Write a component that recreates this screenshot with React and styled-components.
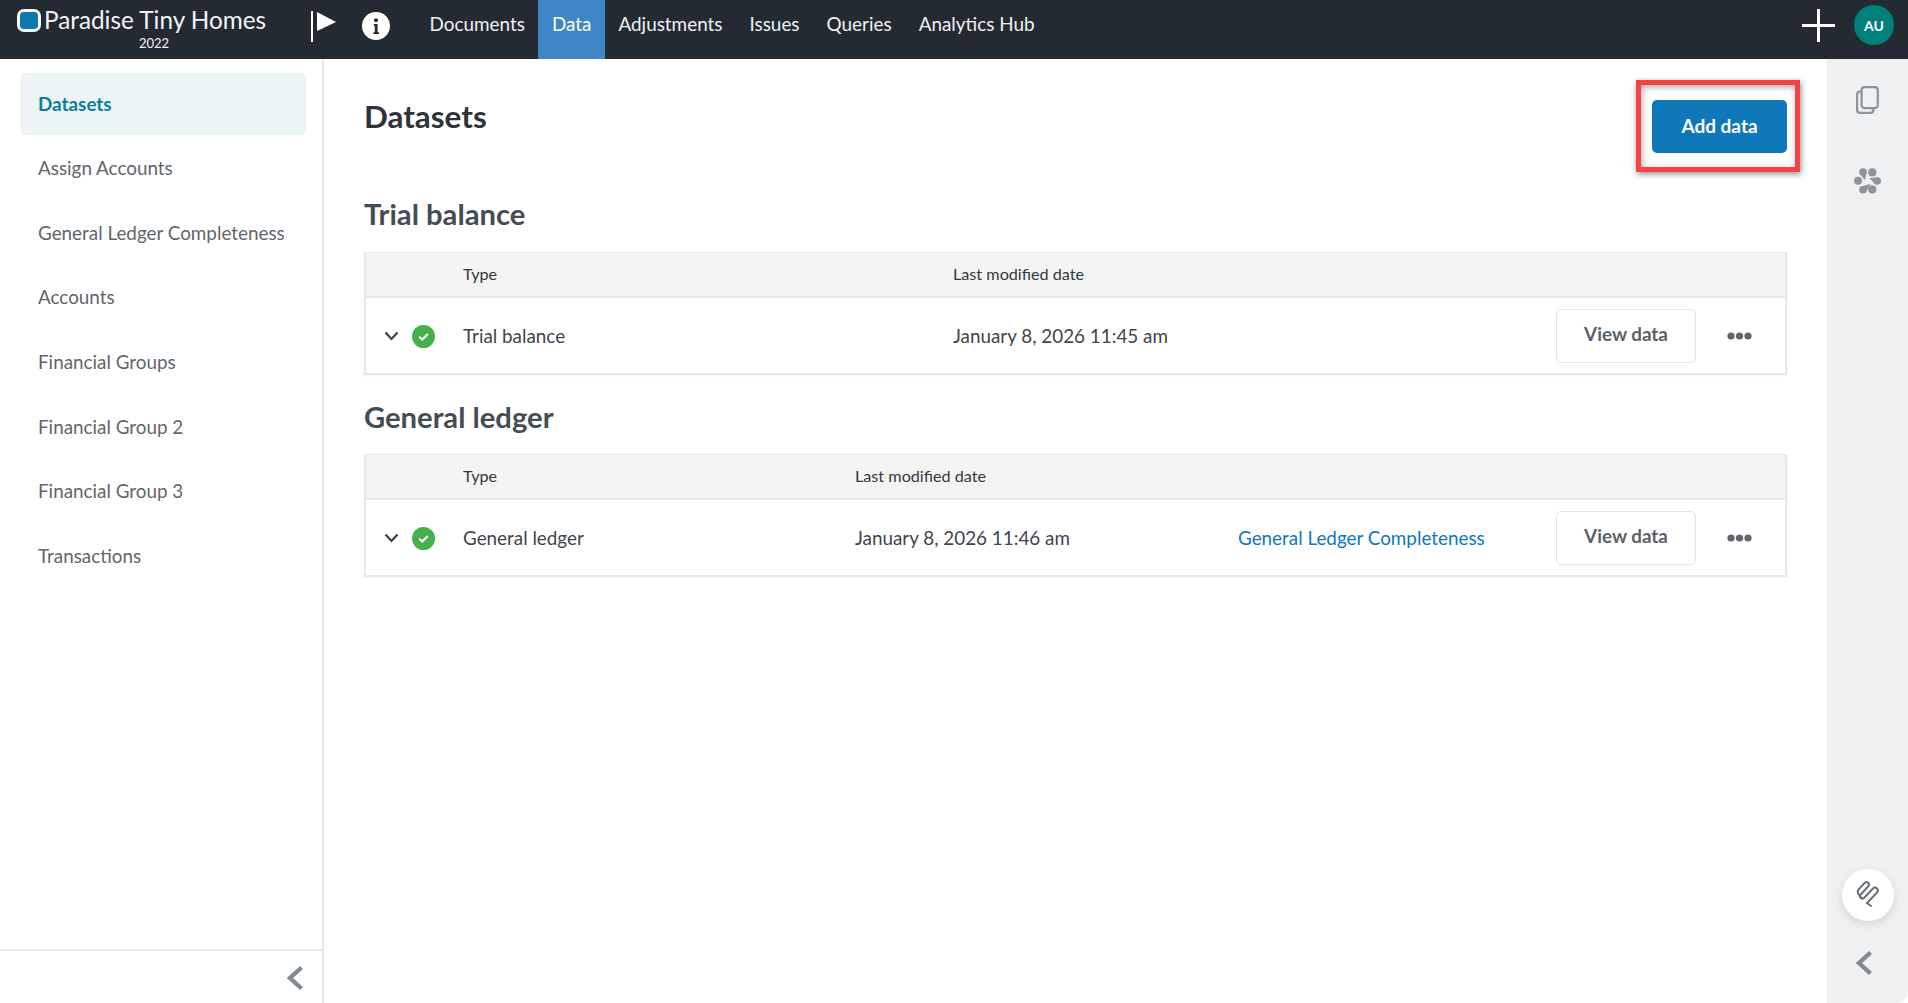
import React from "react";
import styled, { createGlobalStyle } from "styled-components";

const GlobalStyle = createGlobalStyle`
  html, body, #root { height: 100%; margin: 0; }
  body { font-family: Lato, "Open Sans", sans-serif; color: #3c4248; background: #fff; overflow: hidden; }
  * { box-sizing: border-box; }
`;

const Page = styled.div`
  display: flex;
  flex-direction: column;
  height: 1003px;
`;

const Header = styled.header`
  display: flex;
  align-items: stretch;
  height: 59px;
  flex: none;
  background: #232a32;
  color: #fff;
`;

const Brand = styled.div`
  width: 311px;
  flex: none;
  padding: 7px 0 0 17px;
`;

const BrandRow = styled.div`
  display: flex;
  align-items: center;
  gap: 3px;
  width: 250px;
`;

const LogoMark = styled.span`
  width: 24px;
  height: 23px;
  border: 3px solid #f4f7f9;
  border-radius: 7px;
  background: #0e78ad;
  flex: none;
`;

const BrandName = styled.span`
  font-size: 24.3px;
  line-height: 26px;
  white-space: nowrap;
  color: #f2f5f7;
`;

const BrandYear = styled.div`
  font-size: 13px;
  line-height: 16px;
  width: 274px;
  text-align: center;
  margin-top: 2px;
  color: #f0f2f4;
`;

const HeaderIcons = styled.div`
  display: flex;
  align-items: center;
  gap: 26px;
  width: 105px;
  flex: none;
  padding-bottom: 7px;
`;

const Nav = styled.nav`
  display: flex;
  flex: 1;
`;

const NavItem = styled.a`
  display: flex;
  align-items: center;
  padding: 0 13.5px 12px;
  font-size: 18.9px;
  color: ${(p) => (p.$active ? "#fff" : "#eef1f3")};
  background: ${(p) => (p.$active ? "#3f86c7" : "transparent")};
`;

const HeaderRight = styled.div`
  display: flex;
  align-items: center;
  gap: 19px;
  padding: 0 14px 9px 0;
`;

const Avatar = styled.span`
  display: flex;
  align-items: center;
  justify-content: center;
  width: 40px;
  height: 40px;
  border-radius: 50%;
  background: #00807a;
  font-size: 14px;
  font-weight: 700;
`;

const Body = styled.div`
  display: flex;
  flex: 1;
  min-height: 0;
`;

const Sidebar = styled.aside`
  display: flex;
  flex-direction: column;
  width: 324px;
  flex: none;
  border-right: 2px solid #e6e7e8;
`;

const SideList = styled.div`
  flex: 1;
  padding: 14px 16px 0 20px;
`;

const SideItem = styled.a`
  display: flex;
  align-items: center;
  height: ${(p) => (p.$active ? "62px" : "64.7px")};
  padding-left: 18px;
  padding-bottom: ${(p) => (p.$active ? "2px" : "0")};
  border-radius: 5px;
  font-size: 18.85px;
  font-weight: ${(p) => (p.$active ? 700 : 400)};
  color: ${(p) => (p.$active ? "#0b7f96" : "#5f666c")};
  background: ${(p) => (p.$active ? "#edf4f6" : "transparent")};
`;

const SideFooter = styled.div`
  display: flex;
  align-items: center;
  justify-content: flex-end;
  height: 54px;
  padding: 2px 18px 0 0;
  border-top: 2px solid #e6e7e8;
`;

const Main = styled.main`
  flex: 1;
  padding: 22px 40px 0;
`;

const TitleRow = styled.div`
  display: flex;
  justify-content: space-between;
  align-items: flex-start;
  height: 114px;
`;

const PageTitle = styled.h1`
  margin: 15px 0 0;
  font-size: 31.4px;
  line-height: 40px;
  font-weight: 700;
  color: #2f3338;
`;

const Highlight = styled.div`
  position: relative;
  margin-top: 19px;
`;

const HighlightBox = styled.span`
  position: absolute;
  top: -20px;
  left: -16px;
  right: -13px;
  bottom: -19px;
  border: 5px solid #f44346;
  box-shadow: 1px 2px 6px rgba(0, 0, 0, 0.45), inset 1px 2px 6px rgba(0, 0, 0, 0.35);
  pointer-events: none;
`;

const PrimaryButton = styled.button`
  display: block;
  width: 135px;
  height: 53px;
  padding: 0 0 3px;
  border: 0;
  border-radius: 5px;
  background: #0e78ba;
  color: #fff;
  font: 700 19px Lato, sans-serif;
`;

const SectionTitle = styled.h2`
  margin: 0 0 ${(p) => p.$gap}px;
  font-size: 29.2px;
  line-height: 38px;
  font-weight: 700;
  color: #454c53;
`;

const Table = styled.div`
  border: 2px solid #e8e8e8;
  border-top-width: 1px;
  margin-bottom: 23px;
  box-shadow: 0 1px 2px rgba(0, 0, 0, 0.05);
`;

const TableHead = styled.div`
  display: grid;
  grid-template-columns: ${(p) => p.$cols};
  align-items: center;
  height: 45px;
  padding-bottom: 2px;
  background: #f4f4f4;
  border-bottom: 2px solid #e8e8e8;
  font-size: 16.2px;
  color: #33383d;
`;

const TableRow = styled.div`
  display: grid;
  grid-template-columns: ${(p) => p.$cols} 1fr;
  align-items: center;
  height: 75px;
  padding-bottom: 1px;
  font-size: 18.85px;
  color: #3f454b;
`;

const RowIcons = styled.div`
  display: flex;
  align-items: center;
  gap: 13px;
  padding: 2px 0 0 18px;
`;

const CompletenessLink = styled.a`
  color: #0e78ba;
  white-space: nowrap;
`;

const RowActions = styled.div`
  display: flex;
  align-items: center;
  justify-content: flex-end;
  gap: 31px;
  padding: 1px 33px 0 0;
  grid-column: -2 / -1;
`;

const GhostButton = styled.button`
  width: 140px;
  height: 54px;
  padding: 0 0 4px;
  background: #fff;
  border: 1px solid #e4e5e6;
  border-radius: 5px;
  color: #5b6167;
  font: 700 18.85px Lato, sans-serif;
`;

const Rail = styled.aside`
  display: flex;
  flex-direction: column;
  align-items: center;
  width: 81px;
  flex: none;
  padding: 27px 0 27px;
  background: #eff0f2;
  border-bottom-right-radius: 12px;
`;

const RailSpacer = styled.div`
  flex: 1;
`;

const RailStack = styled.div`
  display: flex;
  flex-direction: column;
  align-items: center;
  gap: ${(p) => p.$gap}px;
`;

const ClipButton = styled.span`
  display: flex;
  align-items: center;
  justify-content: center;
  width: 52px;
  height: 52px;
  border-radius: 50%;
  background: #fff;
  box-shadow: 0 3px 8px rgba(0, 0, 0, 0.12);
`;

const RailBack = styled.span`
  display: flex;
  margin-right: 8px;
`;

const FlagIcon = () => (
  <svg width="25" height="31" viewBox="0 0 25 31">
    <rect x="0" y="0" width="2" height="31" fill="#fff" />
    <path d="M6 1 L25 11 L6 20 Z" fill="#fff" />
  </svg>
);

const InfoIcon = () => (
  <svg width="28" height="28" viewBox="0 0 28 28">
    <circle cx="14" cy="14" r="14" fill="#fff" />
    <circle cx="14" cy="8.2" r="2" fill="#232a32" />
    <path d="M11.8 12 H15.6 V20.2 H17 V22 H11.4 V20.2 H12.8 V13.8 H11.8 Z" fill="#232a32" />
  </svg>
);

const PlusIcon = () => (
  <svg width="33" height="33" viewBox="0 0 33 33">
    <path d="M16.5 0 V33 M0 16.5 H33" stroke="#fff" strokeWidth="3" />
  </svg>
);

const Chevron = () => (
  <svg width="15" height="10" viewBox="0 0 15 10">
    <path d="M1.5 1.5 L7.5 8 L13.5 1.5" fill="none" stroke="#3b4248" strokeWidth="2.2" />
  </svg>
);

const StatusOk = () => (
  <svg width="23" height="23" viewBox="0 0 23 23">
    <circle cx="11.5" cy="11.5" r="11.5" fill="#46b04d" />
    <path d="M7.2 11.8 L10.2 14.5 L15.8 9" fill="none" stroke="#fff" strokeWidth="2.2" />
  </svg>
);

const Dots = () => (
  <svg width="25" height="8" viewBox="0 0 25 8">
    <circle cx="4" cy="4" r="3.6" fill="#60666c" />
    <circle cx="12.5" cy="4" r="3.6" fill="#60666c" />
    <circle cx="21" cy="4" r="3.6" fill="#60666c" />
  </svg>
);

const CopyIcon = () => (
  <svg width="23" height="28" viewBox="0 0 23 28" fill="none" stroke="#8d959c" strokeWidth="2.2">
    <rect x="5.6" y="1.1" width="16.2" height="21" rx="3" />
    <path d="M5.6 5.5 H4 A2.9 2.9 0 0 0 1.1 8.4 V24 A2.9 2.9 0 0 0 4 26.9 H14.5 A2.9 2.9 0 0 0 17.4 24 V22.1" />
  </svg>
);

const PawIcon = () => (
  <svg width="27" height="26" viewBox="0 0 27 26" fill="#8d959c">
    <circle cx="18.3" cy="4.4" r="4.1" />
    <circle cx="4" cy="12.7" r="4" />
    <circle cx="18.3" cy="21.4" r="4.1" />
    <circle cx="9" cy="4" r="3.8" />
    <path d="M12.7 3.1 L11 12.6 L5.3 4.9 Z" />
    <circle cx="23.2" cy="13" r="3.8" />
    <path d="M24.5 9.4 L15 10 L21.9 16.6 Z" />
    <circle cx="9" cy="21.7" r="3.8" />
    <path d="M11.3 24.7 L16.7 15.7 L6.7 18.7 Z" />
  </svg>
);

const ClipIcon = () => (
  <svg width="40" height="40" viewBox="0 0 40 40" fill="none" stroke="#686f75" strokeWidth="2" strokeLinecap="round">
    <path d="M23 31 L19 28 L29 17.5 A2.7 2.7 0 0 0 25 13.5 L16 23 A2.3 2.3 0 0 1 12.8 19.5 L21 10.5 A2.7 2.7 0 0 0 17 7.5 L10.4 14.6 C9.4 16 9.8 18 10.8 19.4 L13.6 23" />
  </svg>
);

const BackChevron = () => (
  <svg width="18" height="26" viewBox="0 0 18 26">
    <path d="M15.5 2.5 L4 13 L15.5 23.5" fill="none" stroke="#808a93" strokeWidth="4.4" />
  </svg>
);

const navItems = ["Documents", "Data", "Adjustments", "Issues", "Queries", "Analytics Hub"];
const sideItems = [
  "Datasets",
  "Assign Accounts",
  "General Ledger Completeness",
  "Accounts",
  "Financial Groups",
  "Financial Group 2",
  "Financial Group 3",
  "Transactions",
];

function DataTable({ cols, type, date, link }) {
  return (
    <Table>
      <TableHead $cols={cols}>
        <span />
        <span>Type</span>
        <span>Last modified date</span>
      </TableHead>
      <TableRow $cols={cols}>
        <RowIcons>
          <Chevron />
          <StatusOk />
        </RowIcons>
        <span>{type}</span>
        <span>{date}</span>
        {link && <CompletenessLink>{link}</CompletenessLink>}
        <RowActions>
          <GhostButton>View data</GhostButton>
          <Dots />
        </RowActions>
      </TableRow>
    </Table>
  );
}

export default function App() {
  return (
    <Page>
      <GlobalStyle />
      <Header>
        <Brand>
          <BrandRow>
            <LogoMark />
            <BrandName>Paradise Tiny Homes</BrandName>
          </BrandRow>
          <BrandYear>2022</BrandYear>
        </Brand>
        <HeaderIcons>
          <FlagIcon />
          <InfoIcon />
        </HeaderIcons>
        <Nav>
          {navItems.map((item) => (
            <NavItem key={item} $active={item === "Data"}>
              {item}
            </NavItem>
          ))}
        </Nav>
        <HeaderRight>
          <PlusIcon />
          <Avatar>AU</Avatar>
        </HeaderRight>
      </Header>
      <Body>
        <Sidebar>
          <SideList>
            {sideItems.map((item) => (
              <SideItem key={item} $active={item === "Datasets"}>
                {item}
              </SideItem>
            ))}
          </SideList>
          <SideFooter>
            <BackChevron />
          </SideFooter>
        </Sidebar>
        <Main>
          <TitleRow>
            <PageTitle>Datasets</PageTitle>
            <Highlight>
              <PrimaryButton>Add data</PrimaryButton>
              <HighlightBox />
            </Highlight>
          </TitleRow>
          <SectionTitle $gap={19}>Trial balance</SectionTitle>
          <DataTable cols="97px 490px 380px" type="Trial balance" date="January 8, 2026 11:45 am" />
          <SectionTitle $gap={18}>General ledger</SectionTitle>
          <DataTable
            cols="97px 392px 383px 260px"
            type="General ledger"
            date="January 8, 2026 11:46 am"
            link="General Ledger Completeness"
          />
        </Main>
        <Rail>
          <RailStack $gap={54}>
            <CopyIcon />
            <PawIcon />
          </RailStack>
          <RailSpacer />
          <RailStack $gap={29}>
            <ClipButton>
              <ClipIcon />
            </ClipButton>
            <RailBack>
              <BackChevron />
            </RailBack>
          </RailStack>
        </Rail>
      </Body>
    </Page>
  );
}
